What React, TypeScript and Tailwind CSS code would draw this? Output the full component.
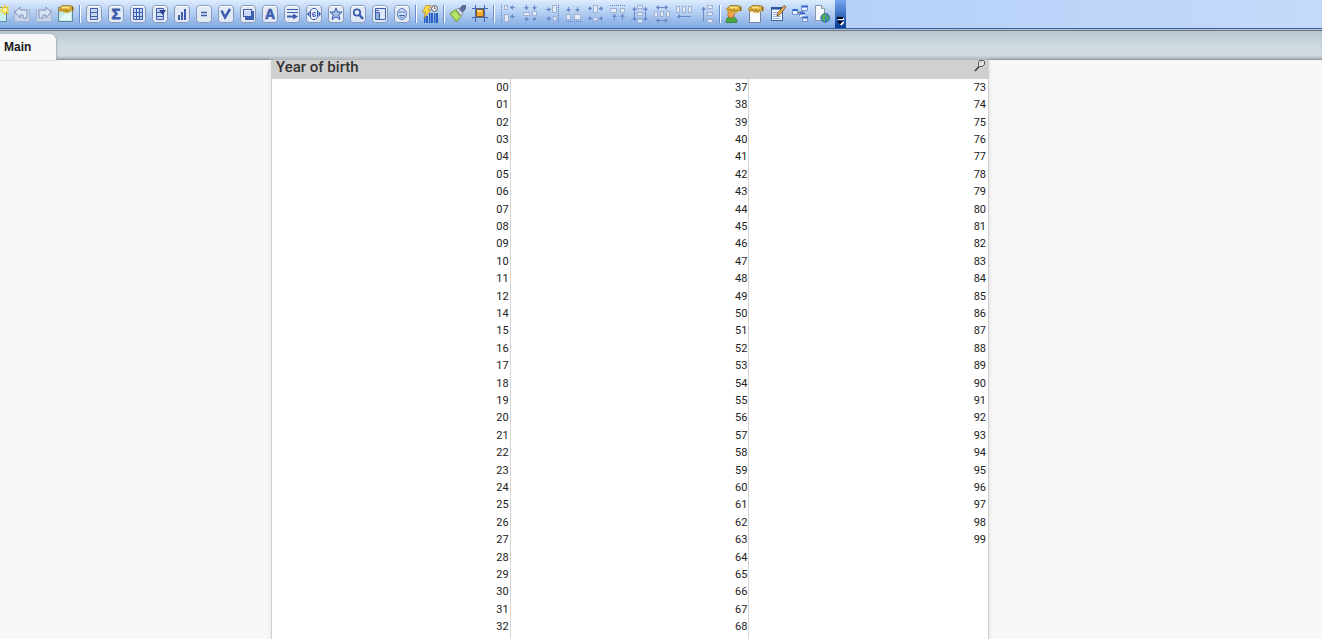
import { useState } from "react";
import type { ReactNode } from "react";

const INK = "#3d5cae";
const PALE = "#c6d8f3";

// ── Icon helpers ────────────────────────────────────────────────────────────

function Icon({ children }: { children: ReactNode }) {
  return (
    <svg viewBox="0 0 18 18" className="h-[18px] w-[18px]" aria-hidden="true">
      {children}
    </svg>
  );
}

// Rounded plate shared by all "create sheet object" icons
function Framed({ children }: { children: ReactNode }) {
  return (
    <Icon>
      <rect x="1.5" y="0.5" width="15" height="17" rx="3" fill="#e1e9f5" stroke="#8798b8" />
      <path d="M3.5 1.5h11" stroke="#fff" />
      {children}
    </Icon>
  );
}

function Box({ x, y, w, h }: { x: number; y: number; w: number; h: number }) {
  return <rect x={x + 0.5} y={y + 0.5} width={w - 1} height={h - 1} fill="#e3ebf8" stroke="#a3b1d0" />;
}

const HEADS = {
  left: "M0 0l3-2.5v5z",
  right: "M0 0l-3-2.5v5z",
  up: "M0 0l-2.5 3h5z",
  down: "M0 0l-2.5-3h5z",
};

// Small arrow with its tip at x,y
function Arrow({ x, y, dir, len = 5 }: { x: number; y: number; dir: keyof typeof HEADS; len?: number }) {
  const tail = { left: `M0 0h${len}`, right: `M0 0h${-len}`, up: `M0 0v${len}`, down: `M0 0v${-len}` }[dir];
  return (
    <g transform={`translate(${x} ${y})`}>
      <path d={tail} stroke="#6d8ac8" />
      <path d={HEADS[dir]} fill="#6d8ac8" />
    </g>
  );
}

function Dots({ d }: { d: string }) {
  return <path d={d} stroke="#6482c4" strokeDasharray="1 1" />;
}

function Hand() {
  return (
    <g>
      <path d="M1 4l4-3.5h7l5 1.5v4l-4 .5-2 2-2-1-2 .5-1-1.5-3 .5z" fill="#e3b53c" />
      <path d="M1 4.5l4-4h7l4 1M2 6l3-2 2 2.5 2-2.5 1 3 2-2 1 1.5" fill="none" stroke="#7d6224" strokeWidth="0.7" />
      <path d="M5 2.5h7" stroke="#ffe48a" strokeWidth="1.5" />
      <path d="M15.5 2v4" stroke="#6d6850" strokeWidth="1.5" />
    </g>
  );
}

// ── Toolbar content ─────────────────────────────────────────────────────────

type Tool = { label: string; icon: ReactNode };

const UNDO = "M2 7l5-5v3h7v8h-4v-3H7v3z";

const GROUPS: Tool[][] = [
  [
    {
      label: "New sheet",
      icon: (
        <Icon>
          <rect x="1.5" y="2.5" width="14" height="14" fill="#c9f0ee" stroke="#5f8f9b" />
          <path d="M14 0v10M9 5h9M10.5 1.5l7 7M17.5 1.5l-7 7" stroke="#f4cf1d" strokeWidth="1.5" />
          <circle cx="14" cy="5" r="2" fill="#fff6a0" />
        </Icon>
      ),
    },
    {
      label: "Undo",
      icon: (
        <Icon>
          <path d="M1.5 4v12.5h15V4" fill="#c8d4e9" stroke="#a7b4d0" />
          <path d={UNDO} fill="#d8e3f6" stroke="#8291bb" />
        </Icon>
      ),
    },
    {
      label: "Redo",
      icon: (
        <Icon>
          <path d="M1.5 4v12.5h15V4" fill="#c8d4e9" stroke="#a7b4d0" />
          <path d={UNDO} transform="matrix(-1 0 0 1 18 0)" fill="#d8e3f6" stroke="#8291bb" />
        </Icon>
      ),
    },
    {
      label: "Sheet properties",
      icon: (
        <Icon>
          <rect x="1.5" y="2.5" width="14" height="14" fill="#c4ecea" stroke="#5c8995" />
          <path d="M3 14l6-6h5v7H3z" fill="#e8faf8" />
          <Hand />
        </Icon>
      ),
    },
  ],
  [
    {
      label: "Create list box",
      icon: (
        <Framed>
          <path d="M5.5 3.5h7v11h-7zM5.5 7.5h7M5.5 11.5h7" fill={PALE} stroke={INK} />
        </Framed>
      ),
    },
    {
      label: "Create statistics box",
      icon: (
        <Framed>
          <text x="9" y="14" textAnchor="middle" fontFamily="Liberation Sans, sans-serif" fontWeight="bold" fontSize="15" fill={INK} stroke={INK} strokeWidth="0.8">Σ</text>
        </Framed>
      ),
    },
    {
      label: "Create table box",
      icon: (
        <Framed>
          <path d="M4.5 3.5h9v11h-9zM7.5 3.5v11M10.5 3.5v11M4.5 7.5h9M4.5 11.5h9" fill={PALE} stroke={INK} />
        </Framed>
      ),
    },
    {
      label: "Create multi box",
      icon: (
        <Framed>
          <path d="M5.5 3.5h7v11h-7zM5.5 7.5h7M5.5 11.5h7" fill={PALE} stroke={INK} />
          <path d="M8 5h7l-3.5 5z" fill="#2d3f8e" />
        </Framed>
      ),
    },
    {
      label: "Create chart",
      icon: (
        <Framed>
          <path d="M5 10h2v5H5zM8 7h2v8H8zM11 4h2v11h-2z" fill={INK} />
        </Framed>
      ),
    },
    {
      label: "Create input box",
      icon: (
        <Framed>
          <path d="M6 7.5h6M6 10.5h6" stroke={INK} strokeWidth="1.7" />
        </Framed>
      ),
    },
    {
      label: "Create current selections box",
      icon: (
        <Framed>
          <path d="M4.5 5.5l3.5 7 5-8.5" fill="none" stroke={INK} strokeWidth="2.5" />
        </Framed>
      ),
    },
    {
      label: "Create button",
      icon: (
        <Framed>
          <path d="M6 6h9v9H6z" fill={INK} />
          <rect x="4.5" y="4.5" width="8" height="7" fill={PALE} stroke={INK} />
          <path d="M5.5 5.5h6" stroke="#fff" />
        </Framed>
      ),
    },
    {
      label: "Create text object",
      icon: (
        <Framed>
          <text x="9" y="14" textAnchor="middle" fontFamily="Liberation Sans, sans-serif" fontWeight="bold" fontSize="14" fill={INK} stroke={INK} strokeWidth="0.6">A</text>
        </Framed>
      ),
    },
    {
      label: "Create line/arrow object",
      icon: (
        <Framed>
          <path d="M4 4.5h11M4 7.5h11" stroke={INK} />
          <path d="M4 11.5h8" stroke={INK} strokeWidth="2" />
          <path d="M10 8.5l5 3-5 3z" fill={INK} />
        </Framed>
      ),
    },
    {
      label: "Create slider/calendar object",
      icon: (
        <Framed>
          <path d="M5.5 5.5l2-2h3l2 2v7l-2 2h-3l-2-2z" fill="#e9f0fb" stroke={INK} />
          <path d="M4.5 6v6L2 9zM13.5 6v6L16 9z" fill={INK} />
          <text x="9" y="12" textAnchor="middle" fontFamily="Liberation Sans, sans-serif" fontWeight="bold" fontSize="8" fill={INK}>6</text>
        </Framed>
      ),
    },
    {
      label: "Create bookmark object",
      icon: (
        <Framed>
          <path d="M9 3l1.7 4h4.3l-3.3 2.8 1.3 4.7-4-2.7-4 2.7 1.3-4.7L3 7h4.3z" fill="#9fbce8" stroke={INK} />
        </Framed>
      ),
    },
    {
      label: "Create search object",
      icon: (
        <Framed>
          <circle cx="8" cy="7.5" r="3.2" fill="#e6eefb" stroke={INK} strokeWidth="1.8" />
          <path d="M10.5 10l3.5 4" stroke={INK} strokeWidth="2.5" />
        </Framed>
      ),
    },
    {
      label: "Create container",
      icon: (
        <Framed>
          <path d="M4.5 3.5h10v11h-10z" fill="#dce8f9" stroke={INK} />
          <path d="M5 8h3v6H5z" fill="#8fabdf" />
          <path d="M5 7.5h3.5V14M5 5.500h3" fill="none" stroke={INK} />
        </Framed>
      ),
    },
    {
      label: "Create custom object",
      icon: (
        <Framed>
          <ellipse cx="9" cy="9" rx="4.5" ry="5.5" fill="#cbdcf5" stroke="#5878c4" />
          <path d="M6 7h2.5M9.5 7H12M6.5 10.5c1 2.5 4 2.5 5 0z" fill="#fff" stroke={INK} />
        </Framed>
      ),
    },
  ],
  [
    {
      label: "Quick chart wizard",
      icon: (
        <Icon>
          <path d="M3 11h4v7H3zM8 8h4v10H8zM13 8h4v10h-4z" fill="#2d5fc0" />
          <path d="M4.5 11v7M9.5 8v10M14.5 8v10" stroke="#5f92e2" />
          <path d="M5 .5h5L7 5h3l-7 8 1.5-6H1.5z" fill="#ffdb45" stroke="#b98518" strokeWidth="0.7" />
          <circle cx="13.5" cy="3.5" r="3" fill="#eef0f4" stroke="#56585f" />
          <path d="M13.5 1.5v2h1.5" fill="none" stroke="#444" strokeWidth="0.7" />
        </Icon>
      ),
    },
  ],
  [
    {
      label: "Format painter",
      icon: (
        <Icon>
          <path d="M9.5 5l4-4.5h3v3L13 8z" fill="#5c6f9f" stroke="#39466f" strokeWidth="0.7" />
          <path d="M7 4.5l2-1.5 5 5-2 3z" fill="#d3d8e2" stroke="#757f91" strokeWidth="0.7" />
          <path d="M6.5 4.5L12 11.5l-4.5 5.500L1 8.5z" fill="#a3d94c" stroke="#60882f" strokeWidth="0.7" />
          <path d="M3.5 8.5l4.5 5M5.5 7.5l4 4.5" stroke="#e0f59d" />
        </Icon>
      ),
    },
    {
      label: "Design grid",
      icon: (
        <Icon>
          <path d="M4.5 0v17M13.5 0v17M1 3.5h16M1 12.5h16" stroke="#4168b8" />
          <rect x="5.5" y="4.5" width="7" height="7" fill="#f2a92b" stroke="#875a17" />
          <path d="M6.5 6h4" stroke="#ffe19a" strokeWidth="2" />
        </Icon>
      ),
    },
  ],
  [
    {
      label: "Align left",
      icon: (
        <Icon>
          <Dots d="M2.5 0v18" />
          <Box x={5} y={0} w={4} h={5} />
          <Box x={5} y={9} w={5} h={8} />
          <Arrow x={11} y={2.5} dir="left" />
          <Arrow x={11} y={11.5} dir="left" />
        </Icon>
      ),
    },
    {
      label: "Center horizontally",
      icon: (
        <Icon>
          <Box x={2} y={7} w={7} h={4} />
          <Box x={11} y={6} w={5} h={5} />
          <Arrow x={5.5} y={5} dir="down" />
          <Arrow x={13.5} y={5} dir="down" />
          <Arrow x={5.5} y={12} dir="up" len={4} />
          <Arrow x={13.5} y={12} dir="up" len={4} />
        </Icon>
      ),
    },
    {
      label: "Align right",
      icon: (
        <Icon>
          <Dots d="M15.5 0v18" />
          <Box x={9} y={0} w={5} h={8} />
          <Box x={10} y={11} w={4} h={5} />
          <Arrow x={8} y={4.5} dir="right" />
          <Arrow x={8} y={13.5} dir="right" />
        </Icon>
      ),
    },
    {
      label: "Align bottom",
      icon: (
        <Icon>
          <Dots d="M1 16.5h16" />
          <Box x={1} y={9} w={5} h={6} />
          <Box x={9} y={9} w={7} h={6} />
          <Arrow x={3.5} y={7} dir="down" />
          <Arrow x={12.5} y={7} dir="down" />
        </Icon>
      ),
    },
    {
      label: "Center vertically",
      icon: (
        <Icon>
          <Box x={6} y={0} w={5} h={8} />
          <Box x={6} y={12} w={5} h={4} />
          <Arrow x={5} y={3.5} dir="right" len={4} />
          <Arrow x={5} y={13.5} dir="right" len={4} />
          <Arrow x={12} y={3.5} dir="left" len={4} />
          <Arrow x={12} y={13.5} dir="left" len={4} />
        </Icon>
      ),
    },
    {
      label: "Align top",
      icon: (
        <Icon>
          <Dots d="M1 0.5h16" />
          <Box x={1} y={3} w={7} h={5} />
          <Box x={11} y={3} w={5} h={5} />
          <Arrow x={5.5} y={9} dir="up" len={6} />
          <Arrow x={13.5} y={9} dir="up" len={6} />
        </Icon>
      ),
    },
    {
      label: "Space vertically",
      icon: (
        <Icon>
          <Box x={6} y={0} w={6} h={4} />
          <Box x={6} y={7} w={6} h={4} />
          <Box x={6} y={14} w={6} h={4} />
          <Arrow x={3.5} y={2} dir="up" len={13} />
          <Arrow x={3.5} y={16} dir="down" len={10} />
          <Arrow x={14.5} y={2} dir="up" len={13} />
          <Arrow x={14.5} y={16} dir="down" len={10} />
        </Icon>
      ),
    },
    {
      label: "Space horizontally",
      icon: (
        <Icon>
          <Box x={1} y={6} w={4} h={6} />
          <Box x={7} y={6} w={4} h={6} />
          <Box x={13} y={6} w={4} h={6} />
          <Arrow x={3} y={2.5} dir="left" len={12} />
          <Arrow x={15} y={2.5} dir="right" len={10} />
          <Arrow x={3} y={15.5} dir="left" len={12} />
          <Arrow x={15} y={15.5} dir="right" len={10} />
        </Icon>
      ),
    },
    {
      label: "Adjust left",
      icon: (
        <Icon>
          <Box x={1} y={1} w={4} h={7} />
          <Box x={7} y={1} w={4} h={7} />
          <Box x={13} y={1} w={4} h={7} />
          <Arrow x={2} y={11.5} dir="left" len={14} />
        </Icon>
      ),
    },
    {
      label: "Adjust top",
      icon: (
        <Icon>
          <Box x={10} y={0} w={6} h={4} />
          <Box x={10} y={7} w={6} h={4} />
          <Box x={10} y={14} w={6} h={4} />
          <Arrow x={6.5} y={2} dir="up" len={15} />
        </Icon>
      ),
    },
  ],
  [
    {
      label: "User preferences",
      icon: (
        <Icon>
          <path d="M1 17.5c0-4 2-6 5.5-6s5.5 2 5.5 6z" fill="#4aa843" stroke="#2d7230" strokeWidth="0.7" />
          <circle cx="6" cy="9.5" r="3.3" fill="#f5a052" stroke="#b45d1d" strokeWidth="0.7" />
          <Hand />
        </Icon>
      ),
    },
    {
      label: "Document properties",
      icon: (
        <Icon>
          <path d="M3 2h10v15H3z" fill="#f8fafc" />
          <path d="M2.5 2v15.5h11V3" fill="none" stroke="#78849e" />
          <Hand />
        </Icon>
      ),
    },
    {
      label: "Edit script",
      icon: (
        <Icon>
          <rect x="2.5" y="2.5" width="11" height="13" fill="#f4f8ff" stroke="#41639f" />
          <path d="M2 3.5h12" stroke="#264f9d" strokeWidth="2" />
          <path d="M4 7.5h6M4 9.5h5M4 11.5h8M4 13.5h7" stroke="#98b0df" />
          <path d="M8 11l1-3.5L15 .5l2 1.5-6 7.5z" fill="#e8b14b" stroke="#68491d" strokeWidth="0.8" />
        </Icon>
      ),
    },
    {
      label: "Table viewer",
      icon: (
        <Icon>
          <path d="M6 7h6V3M7 7.5l4 5.5" fill="none" stroke="#4a5f92" />
          <path d="M1 4.5h6v5H1zM10 1h7v5h-7zM11 12h6v5h-6zM9 8h5v4H9z" fill="#eaf2ff" />
          <path d="M1 5h6M10 1.5h7M11 12.5h6M9 8.5h5" stroke="#2f62c8" strokeWidth="2" />
          <path d="M1.5 4v5.5h5V5M10.5 1v4.5h6V2M11.5 12v4.5h5V13" fill="none" stroke="#6f92d4" />
        </Icon>
      ),
    },
    {
      label: "Show web view",
      icon: (
        <Icon>
          <path d="M2.5.5h6l3 3v12h-9z" fill="#f7f9fc" stroke="#8c97ab" />
          <path d="M8.5.5v3h3" fill="#d5deea" stroke="#8c97ab" />
          <circle cx="12.2" cy="12.8" r="4.4" fill="#3c82d2" stroke="#285985" strokeWidth="0.7" />
          <path d="M9 10l3-1 1.5 2-2 2 1 2-1 2-2.5-3zM14.5 10l1.5 3-1.5 2.5-1-2z" fill="#52b044" />
        </Icon>
      ),
    },
  ],
];

function Separator() {
  return <span className="mx-0.5 h-[18px] w-0.5 border-l border-[#6a8ccb] bg-white" />;
}

function Toolbar() {
  return (
    <div className="flex h-7 shrink-0 overflow-hidden bg-linear-to-r from-[#9ebef5] to-[#c4dafa]">
      <div className="flex shrink-0 items-center bg-linear-to-b from-[#ddecfe] to-[#81a9e2]">
        {/* first tool is scrolled half out at the left edge */}
        <div className="-ml-[11px] flex items-center pr-0.5">
          {GROUPS.map((tools, i) => (
            <div key={i} className="flex items-center">
              {i > 0 && <Separator />}
              {tools.map((tool) => (
                <button
                  key={tool.label}
                  aria-label={tool.label}
                  title={tool.label}
                  className="flex h-7 w-[22px] items-center justify-center"
                >
                  {tool.icon}
                </button>
              ))}
            </div>
          ))}
        </div>
        <button
          aria-label="Toolbar options"
          className="flex h-7 w-[11px] items-end justify-center bg-linear-to-b from-[#75a6f1] to-[#053995] pb-0.5"
        >
          <svg viewBox="0 0 7 10" className="h-[10px] w-[7px]" aria-hidden="true">
            <path d="M1 2h6v2H1zM2 6h5v1L4.5 9.5 2 7z" fill="#fff" />
            <path d="M0 1h6v2H0zM0 5h6L3 8.5z" fill="#000" />
            <path d="M1 3.5h6M3.5 8.5L6.5 5.5" stroke="#fff" />
          </svg>
        </button>
      </div>
    </div>
  );
}

// ── List box ────────────────────────────────────────────────────────────────

const range = (from: number, to: number) =>
  Array.from({ length: to - from + 1 }, (_, i) => String(from + i).padStart(2, "0"));

const COLUMNS = [[...range(0, 12), ...range(14, 32)], range(37, 68), range(73, 99)];

function YearListBox() {
  const [selected, setSelected] = useState<string | null>(null);

  return (
    <section className="mr-[333px] ml-[271px] flex min-w-0 flex-1 flex-col border-x border-[#cfcfcf] bg-white font-['Roboto',sans-serif] text-[#222222] shadow-[0_0_4px_#dddddd]">
      <header className="flex h-[19px] shrink-0 items-start justify-between bg-[#d0d0d0] pr-0.5 pl-1">
        <h1 className="text-[15px] leading-[14px] font-medium text-[#333333]">Year of birth</h1>
        <button aria-label="Search" className="h-3 w-3">
          <svg viewBox="0 0 12 12" className="h-3 w-3" aria-hidden="true">
            <path d="M5.5.5h4l1 1v3l-2 2h-3l-1-1v-3z" fill="#dedede" stroke="#555" />
            <path d="M5 6.5L1 11" stroke="#444" strokeWidth="1.8" />
          </svg>
        </button>
      </header>
      <div className="grid min-h-0 flex-1 grid-cols-[1fr_1fr_1fr]">
        {COLUMNS.map((years, i) => (
          <ul
            key={i}
            className="grid grid-rows-[repeat(32,minmax(0,1fr))] border-r border-[#d6d6d6] pb-[3px] last:border-r-0 last:pr-px"
          >
            {years.map((year) => (
              <li key={year} className="flex min-h-0">
                <button
                  onClick={() => setSelected(year === selected ? null : year)}
                  className={`flex-1 pr-px text-right text-[11px] leading-4 ${
                    year === selected ? "bg-[#52cc52]" : ""
                  }`}
                >
                  {year}
                </button>
              </li>
            ))}
          </ul>
        ))}
      </div>
    </section>
  );
}

export default function App() {
  return (
    <div className="flex h-screen flex-col overflow-hidden bg-[#f8f8f8]">
      <Toolbar />
      <div className="h-[3px] shrink-0 border-t border-b border-t-[#3b619c] border-b-[#77797c] bg-[#a9bfe2]" />

      {/* Sheet tabs */}
      <nav className="flex h-[29px] shrink-0 items-end border-b border-[#92989d] bg-linear-to-b from-[#b5c5cd] via-[#d0dae1] to-[#d3dbe3] shadow-[inset_0_-2px_2px_#aeb7bd]">
        <button className="-mb-px h-[26px] w-14 rounded-tr-md bg-[#f8f8f8] pl-1 text-left font-['Liberation_Sans',sans-serif] text-xs font-bold text-[#1a1a1a] shadow-[1px_0_2px_#a5afb6]">
          Main
        </button>
      </nav>

      <main className="flex min-h-0 flex-1">
        <YearListBox />
      </main>
    </div>
  );
}
